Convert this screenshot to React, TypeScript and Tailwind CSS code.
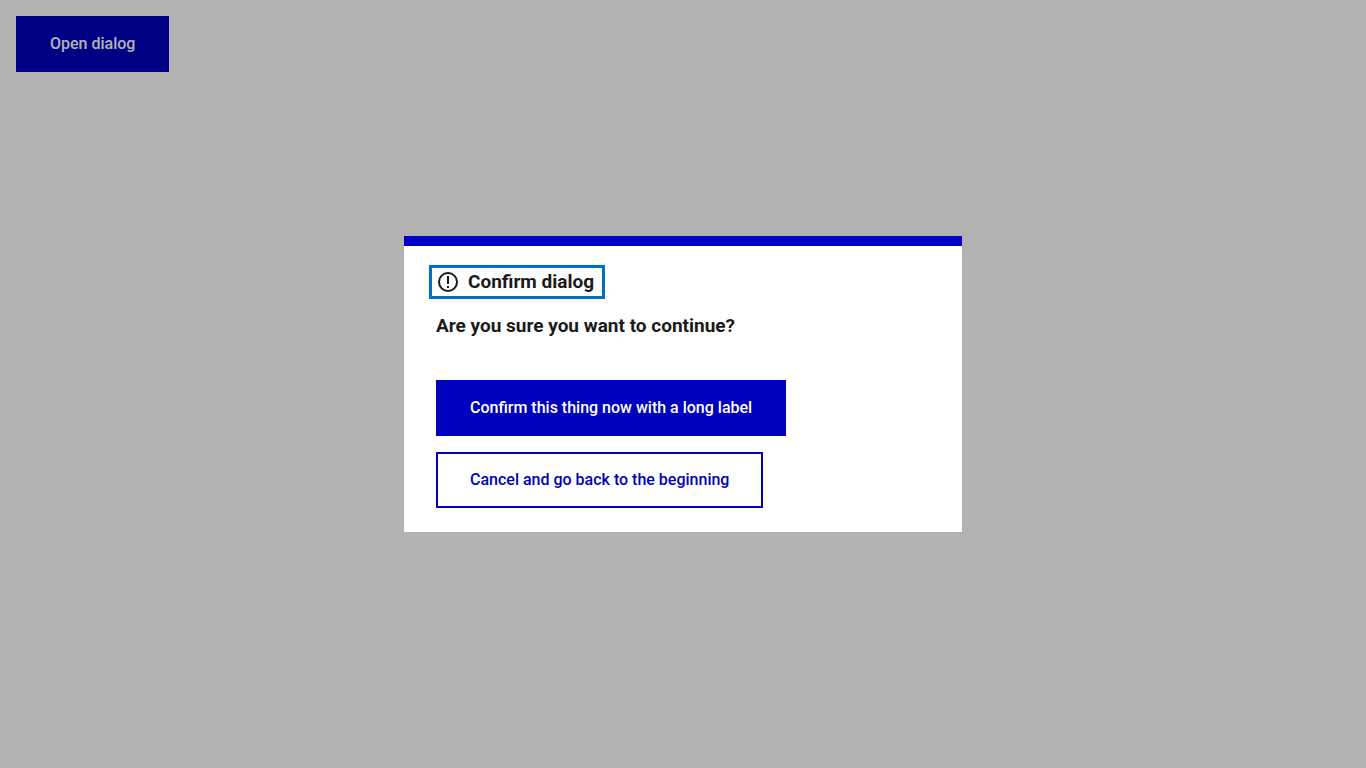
const button =
  "flex min-h-14 w-fit items-center border-2 border-[#0000bf] px-8 text-left text-base font-medium";

export default function App() {
  return (
    <div className="min-h-screen bg-white p-4 font-['Roboto','Liberation_Sans',sans-serif]">
      <button type="button" className={`${button} bg-[#0000bf] text-white`}>
        Open dialog
      </button>
      <div className="fixed inset-0 flex items-center justify-center bg-black/30">
        <section
          role="dialog"
          aria-modal="true"
          aria-labelledby="dialog-title"
          className="w-full max-w-[558px] border-t-[10px] border-[#0000bf] bg-white px-8 pt-[26px] pb-6 text-[#1a1a1a]"
        >
          <h2
            id="dialog-title"
            tabIndex={-1}
            className="flex h-5 w-fit items-center gap-2 pr-1 text-[19px] font-bold outline-3 outline-offset-4 outline-[#0072c6]"
          >
            <svg viewBox="0 0 24 24" className="size-6 shrink-0" aria-hidden="true">
              <circle cx="12" cy="12" r="9" fill="none" stroke="currentColor" strokeWidth="2" />
              <path d="M11 6h2v8h-2zM11 16h2v2h-2z" fill="currentColor" />
            </svg>
            Confirm dialog
          </h2>
          <h3 className="pt-5 text-[19px] leading-7 font-bold">Are you sure you want to continue?</h3>
          <div className="flex flex-col gap-4 pt-10">
            <button type="button" className={`${button} bg-[#0000bf] text-white`}>
              Confirm this thing now with a long label
            </button>
            <button type="button" className={`${button} bg-white text-[#0000bf]`}>
              Cancel and go back to the beginning
            </button>
          </div>
        </section>
      </div>
    </div>
  );
}
